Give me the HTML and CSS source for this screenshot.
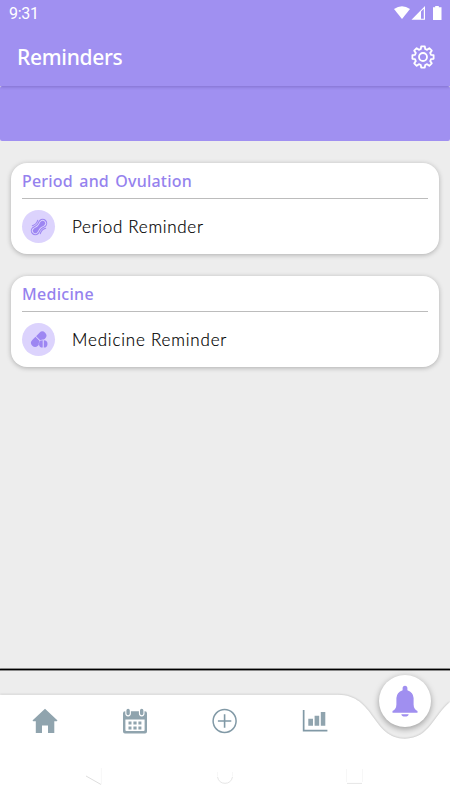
FILE: index.html
```html
<!DOCTYPE html>
<html lang="en">
<head>
<meta charset="utf-8">
<title>Reminders</title>
<link rel="stylesheet" href="styles.css">
</head>
<body>
<div class="app">
  <header class="header">
    <div class="status">
      <span class="time">9:31</span>
      <svg class="status-icons" width="50" height="16" viewBox="0 0 50 16" fill="#fff">
        <path d="M0 4Q8-1.6 16 4L8 14Z"/>
        <path fill-rule="evenodd" d="M17.5 14.8L31 1V14.8ZM27 6.5V13.8H29.8V3.8Z"/>
        <path d="M41.2 1H44.8V2.2H47.5V15H39V2.2H41.2Z"/>
      </svg>
    </div>
    <div class="toolbar">
      <h1 class="title">Reminders</h1>
      <svg class="gear" width="24" height="24" viewBox="-12 -12 24 24" fill="none" stroke="#fff" stroke-width="1.8" stroke-linejoin="round">
        <path d="M-2.2-8L-1.8-10.6H1.8L2.2-8L4.1-7.2L6.3-8.8L8.8-6.3L7.2-4.1L8-2.2L10.6-1.8V1.8L8 2.2L7.2 4.1L8.8 6.3L6.3 8.8L4.1 7.2L2.2 8L1.8 10.6H-1.8L-2.2 8L-4.1 7.2L-6.3 8.8L-8.8 6.3L-7.2 4.1L-8 2.2L-10.6 1.8V-1.8L-8-2.2L-7.2-4.1L-8.8-6.3L-6.3-8.8L-4.1-7.2Z"/>
        <circle r="4"/>
      </svg>
    </div>
  </header>
  <div class="band"></div>

  <main class="content">
    <section class="card">
      <h2 class="card-title period-title">Period and Ovulation</h2>
      <div class="row">
        <span class="badge">
          <svg width="18" height="18" viewBox="-9 -9 18 18" fill="none" stroke="#9d86f2" stroke-linecap="round">
            <g transform="rotate(-45)">
              <path stroke-width="1.1" d="M-5.2-4C-3-4-2.2-2.9 0-2.9S3-4 5.2-4A4 4 0 0 1 5.2 4C3 4 2.2 2.9 0 2.9S-3 4-5.2 4A4 4 0 0 1-5.2-4Z"/>
              <path fill="#9d86f2" stroke="none" d="M-5.2-2.5C-3-2.5-2.2-1.5 0-1.5S3-2.5 5.2-2.5A2.5 2.5 0 0 1 5.2 2.5C3 2.5 2.2 1.5 0 1.5S-3 2.5-5.2 2.5A2.5 2.5 0 0 1-5.2-2.5Z"/>
              <path stroke-width="1.1" d="M-3.8-5.6C-1.5-4.4 1.5-4.4 3.8-5.6M-3.8 5.6C-1.5 4.4 1.5 4.4 3.8 5.6"/>
            </g>
          </svg>
        </span>
        <span class="label period-label">Period Reminder</span>
      </div>
    </section>
    <section class="card">
      <h2 class="card-title medicine-title">Medicine</h2>
      <div class="row">
        <span class="badge">
          <svg width="18" height="18" viewBox="0 0 18 18">
            <g transform="rotate(-45 8.7 8.2)" fill="#9d86f2">
              <path d="M8.1 4.2H3.6A4 4 0 0 0 3.6 12.2H8.1Z"/>
              <path d="M9 4.2H13.8A4 4 0 0 1 13.8 12.2H9Z"/>
            </g>
            <circle cx="13.2" cy="12.9" r="4.5" fill="#dcd3fd"/>
            <path fill="#9d86f2" d="M12.7 9.2V16.6A3.7 3.7 0 0 1 12.7 9.2ZM13.8 9.2A3.7 3.7 0 0 1 13.8 16.6Z"/>
          </svg>
        </span>
        <span class="label medicine-label">Medicine Reminder</span>
      </div>
    </section>
  </main>

  <div class="rule"></div>
  <nav class="nav">
    <svg class="nav-shape" width="450" height="120" viewBox="0 0 450 120">
      <path fill="#fff" d="M0 14.8H338C375 14.8 372 58.7 405 58.7S435 14.8 472 14.8V120H0Z"/>
    </svg>
    <div class="tabs">
      <svg width="26" height="26" viewBox="0 0 26 26" fill="#90a4ae"><path d="M13 .8L25.3 12.2Q25.6 13.3 24.5 13.3H22.3V25H16V17.5H10V25H3.8V13.3H1.5Q.4 13.3.7 12.2Z"/></svg>
      <svg width="26" height="26" viewBox="0 0 26 26">
        <path fill="#90a4ae" fill-rule="evenodd" d="M3 3.2H23Q25 3.2 25 5.2V23.4Q25 25.4 23 25.4H3Q1 25.4 1 23.4V5.2Q1 3.2 3 3.2ZM3.4 11.6V22Q3.4 23 4.4 23H21.6Q22.6 23 22.6 22V11.6Z"/>
        <path stroke="#fff" stroke-width="5.6" stroke-linecap="round" d="M6.1 2.4V5.6M19.7 2.4V5.6"/>
        <path stroke="#90a4ae" stroke-width="3.4" stroke-linecap="round" d="M6.1 2.5V5.5M19.7 2.5V5.5"/>
        <path fill="#90a4ae" d="M6.5 13.6H9.5V16.6H6.5ZM11.4 13.6H14.6V16.6H11.4ZM16.4 13.6H19.4V16.6H16.4ZM6.5 18.6H9.5V21.6H6.5ZM11.4 18.6H14.6V21.6H11.4ZM16.4 18.6H19.4V21.6H16.4Z"/>
      </svg>
      <svg width="26" height="26" viewBox="0 0 26 26" fill="none" stroke="#8199a6" stroke-width="1.5"><circle cx="12.6" cy="13" r="11.5"/><path d="M12.6 6.3V19.7M5.9 13H19.3" stroke-width="1.6"/></svg>
      <svg width="26" height="26" viewBox="0 0 26 26" fill="#8199a6"><path d="M.8 1.9H2.5V21.7H25.4V23.4H.8Z"/><path fill="#90a4ae" d="M6.3 10.8H11V17.8H6.3ZM12.6 7.8H17.2V17.8H12.6ZM18.8 4H23.3V17.8H18.8Z"/></svg>
    </div>
    <div class="bell">
      <svg width="26" height="32" viewBox="0 0 26 32" fill="#a08ff0"><path d="M10.6 5.2V3.3Q10.6.7 13 .7T15.4 3.3V5.2Q21.3 7.2 21.6 13V19.5Q21.7 24.2 25.5 26V27.8H.5V26Q4.3 24.2 4.4 19.5V13Q4.7 7.2 10.6 5.2ZM9.3 29.2H16.7Q16.4 31.5 13 31.5T9.3 29.2Z"/></svg>
    </div>
    <svg class="system" width="450" height="24" viewBox="0 0 450 24" fill="none" stroke="#dedede">
      <path d="M86 9L101 17.5"/><path stroke="#f7f7f7" d="M101.3 1V17.5M217.5 5V9.5M232.5 5V9.5M346.5 2V15M362.6 2V15"/>
      <path stroke="#e6e6e6" d="M217.5 10Q219 16.3 225 16.3T232.5 10M347 16.4H362"/>
    </svg>
  </nav>
</div>
</body>
</html>
```

FILE: styles.css
```css
* { box-sizing: border-box; }
body { margin: 0; background: #ededed; }
h1, h2 { margin: 0; font-weight: 400; }
svg { display: block; flex: none; }

.app {
  width: 450px;
  height: 800px;
  display: flex;
  flex-direction: column;
  overflow: hidden;
  font-family: Roboto, sans-serif;
}

.header {
  position: relative;
  height: 86px;
  flex: none;
  background: #a090f1;
  box-shadow: 0 1px 3px rgba(60, 40, 130, .3);
  color: #fff;
}
.status {
  height: 28px;
  padding: 0 0 0 9px;
  display: flex;
  justify-content: space-between;
}
.time { font-size: 16px; line-height: 28px; letter-spacing: -.3px; }
.status-icons { margin: 5px 6px 0 0; }
.toolbar {
  height: 57px;
  padding: 0 15px 0 17px;
  display: flex;
  align-items: center;
  justify-content: space-between;
}
.title { font-family: "Noto Sans", sans-serif; font-size: 21px; font-weight: 500; line-height: 30px; letter-spacing: -.3px; padding-top: 1px; }

.band { height: 54.6px; flex: none; background: #a090f1; border-radius: 2px; }

.content {
  flex: 1;
  padding: 22px 11px 0;
  display: flex;
  flex-direction: column;
  gap: 22px;
}
.card {
  height: 91.3px;
  flex: none;
  padding: 0 11px;
  background: #fff;
  border-radius: 16px;
  box-shadow: 0 1px 5px rgba(0, 0, 0, .27);
}
.card-title {
  height: 36px;
  border-bottom: 1px solid #bcbcbc;
  color: #9582ee;
  font-family: "Noto Sans", sans-serif;
  font-size: 16px;
  font-weight: 500;
  line-height: 37px;
  white-space: nowrap;
}
.period-title { letter-spacing: .2px; word-spacing: 2px; }
.medicine-title { letter-spacing: .3px; }
.row { height: 56px; display: flex; align-items: center; gap: 17px; }
.badge {
  width: 33px;
  height: 33px;
  border-radius: 50%;
  background: #dcd3fd;
  display: flex;
  align-items: center;
  justify-content: center;
}
.label {
  color: #000;
  font-family: Lato, sans-serif;
  font-size: 17px;
  font-weight: 300;
  white-space: nowrap;
  -webkit-text-stroke: .2px #000;
}
.period-label { letter-spacing: .7px; }
.medicine-label { letter-spacing: .8px; }

.rule { height: 3px; flex: none; background: #000; border: solid #8a8a8a; border-width: 1px 0; border-radius: 1px; }

.nav { position: relative; height: 129px; flex: none; padding-top: 37px; }
.nav-shape { position: absolute; left: 0; bottom: 0; filter: drop-shadow(0 0 1px rgba(0, 0, 0, .25)); }
.tabs { position: relative; display: flex; gap: 64px; padding-left: 32px; }
.bell {
  position: absolute;
  left: 379px;
  top: 4px;
  width: 52px;
  height: 52px;
  border-radius: 50%;
  background: #fff;
  box-shadow: 0 2px 6px rgba(0, 0, 0, .35);
  display: flex;
  align-items: center;
  justify-content: center;
}
.system { position: absolute; left: 0; bottom: 9px; }
```
